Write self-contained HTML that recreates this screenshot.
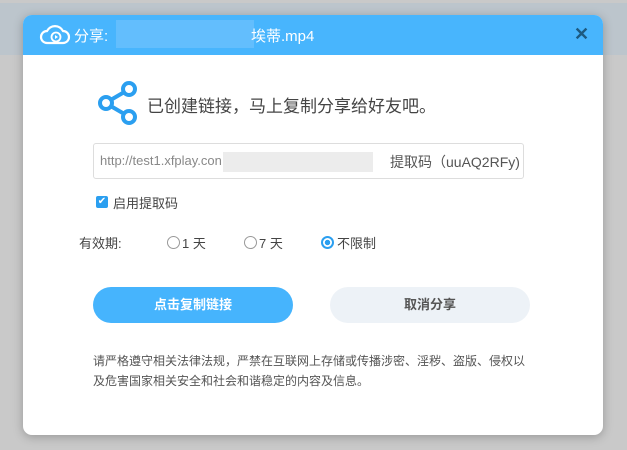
<!DOCTYPE html>
<html><head><meta charset="utf-8"><style>
body{margin:0;width:627px;height:450px;background:#c9c9c9;position:relative;overflow:hidden;font-family:"Liberation Sans","Noto Sans CJK SC",sans-serif;}
.topband{position:absolute;left:0;top:3px;width:627px;height:52px;background:#bcc5cc;}
.modal{position:absolute;left:23px;top:15px;width:580px;height:420px;background:#fff;border-radius:9px;overflow:hidden;box-shadow:0 2px 10px rgba(0,0,0,.25);}
.hd{height:40px;background:#48b5fd;color:#fff;font-size:15px;position:relative;}
.hd .t{position:absolute;left:51px;top:10px;}
.blur{position:absolute;left:93px;top:5px;width:138px;height:28px;background:#63befd;}
.x{position:absolute;left:551px;top:9px;color:#1d5a80;font-size:18px;font-weight:bold;}
.abs{position:absolute;}
</style></head><body>
<div class="topband"></div>
<div class="modal">
<div class="hd">
<svg class="abs" style="left:16px;top:8px" width="32" height="22" viewBox="0 0 32 22"><path d="M8 20 H24 A6 6 0 0 0 24 8 A9 9 0 0 0 8 8 A6 6 0 0 0 8 20Z" fill="none" stroke="#fff" stroke-width="2.2"/><circle cx="17" cy="14" r="4.5" fill="none" stroke="#fff" stroke-width="1.8"/><path d="M16 12 L19 14 L16 16Z" fill="#fff"/></svg>
<span class="t">分享:</span><div class="blur"></div><span class="abs" style="left:228px;top:10px">埃蒂.mp4</span>
<span class="x">✕</span>
</div>
<svg class="abs" style="left:74px;top:65px" width="42" height="46" viewBox="0 0 42 46"><g fill="none" stroke="#2b9ff0" stroke-width="4"><circle cx="9" cy="23" r="6"/><circle cx="32" cy="9" r="6"/><circle cx="32" cy="37" r="6"/><path d="M14.5 19.5 L26.5 12.5 M14.5 26.5 L26.5 33.5"/></g></svg>
<div class="abs" style="left:124px;top:77px;font-size:17px;color:#444">已创建链接，马上复制分享给好友吧。</div>
<div class="abs" style="left:70px;top:128px;width:429px;height:34px;border:1px solid #ddd;border-radius:3px;"></div>
<div class="abs" style="left:77px;top:138px;font-size:13px;color:#888">http://test1.xfplay.con</div>
<div class="abs" style="left:200px;top:137px;width:150px;height:20px;background:#ececec"></div>
<div class="abs" style="left:367px;top:137px;font-size:14px;color:#555">提取码（uuAQ2RFy)</div>
<div class="abs" style="left:73px;top:181px;width:12px;height:12px;background:#2b9ff0;border-radius:2px;color:#fff;font-size:10px;line-height:12px;text-align:center">✔</div>
<div class="abs" style="left:90px;top:178px;font-size:13px;color:#444">启用提取码</div>
<div class="abs" style="left:56px;top:218px;font-size:13px;color:#444">有效期:</div>
<div class="abs" style="left:144px;top:221px;width:11px;height:11px;border:1px solid #999;border-radius:50%"></div>
<div class="abs" style="left:159px;top:218px;font-size:13px;color:#444">1 天</div>
<div class="abs" style="left:221px;top:221px;width:11px;height:11px;border:1px solid #999;border-radius:50%"></div>
<div class="abs" style="left:236px;top:218px;font-size:13px;color:#444">7 天</div>
<div class="abs" style="left:298px;top:221px;width:9px;height:9px;border:2px solid #2b9ff0;border-radius:50%;background:radial-gradient(#2b9ff0 40%,#fff 45%)"></div>
<div class="abs" style="left:314px;top:218px;font-size:13px;color:#444">不限制</div>
<div class="abs" style="left:70px;top:272px;width:200px;height:36px;border-radius:18px;background:#46b4fd;color:#fff;font-weight:bold;font-size:13px;line-height:36px;text-align:center">点击复制链接</div>
<div class="abs" style="left:307px;top:272px;width:200px;height:36px;border-radius:18px;background:#edf2f7;color:#555;font-weight:bold;font-size:13px;line-height:36px;text-align:center">取消分享</div>
<div class="abs" style="left:70px;top:336px;width:440px;font-size:12px;line-height:20px;color:#555">请严格遵守相关法律法规，严禁在互联网上存储或传播涉密、淫秽、盗版、侵权以及危害国家相关安全和社会和谐稳定的内容及信息。</div>
</div>
</body></html>
